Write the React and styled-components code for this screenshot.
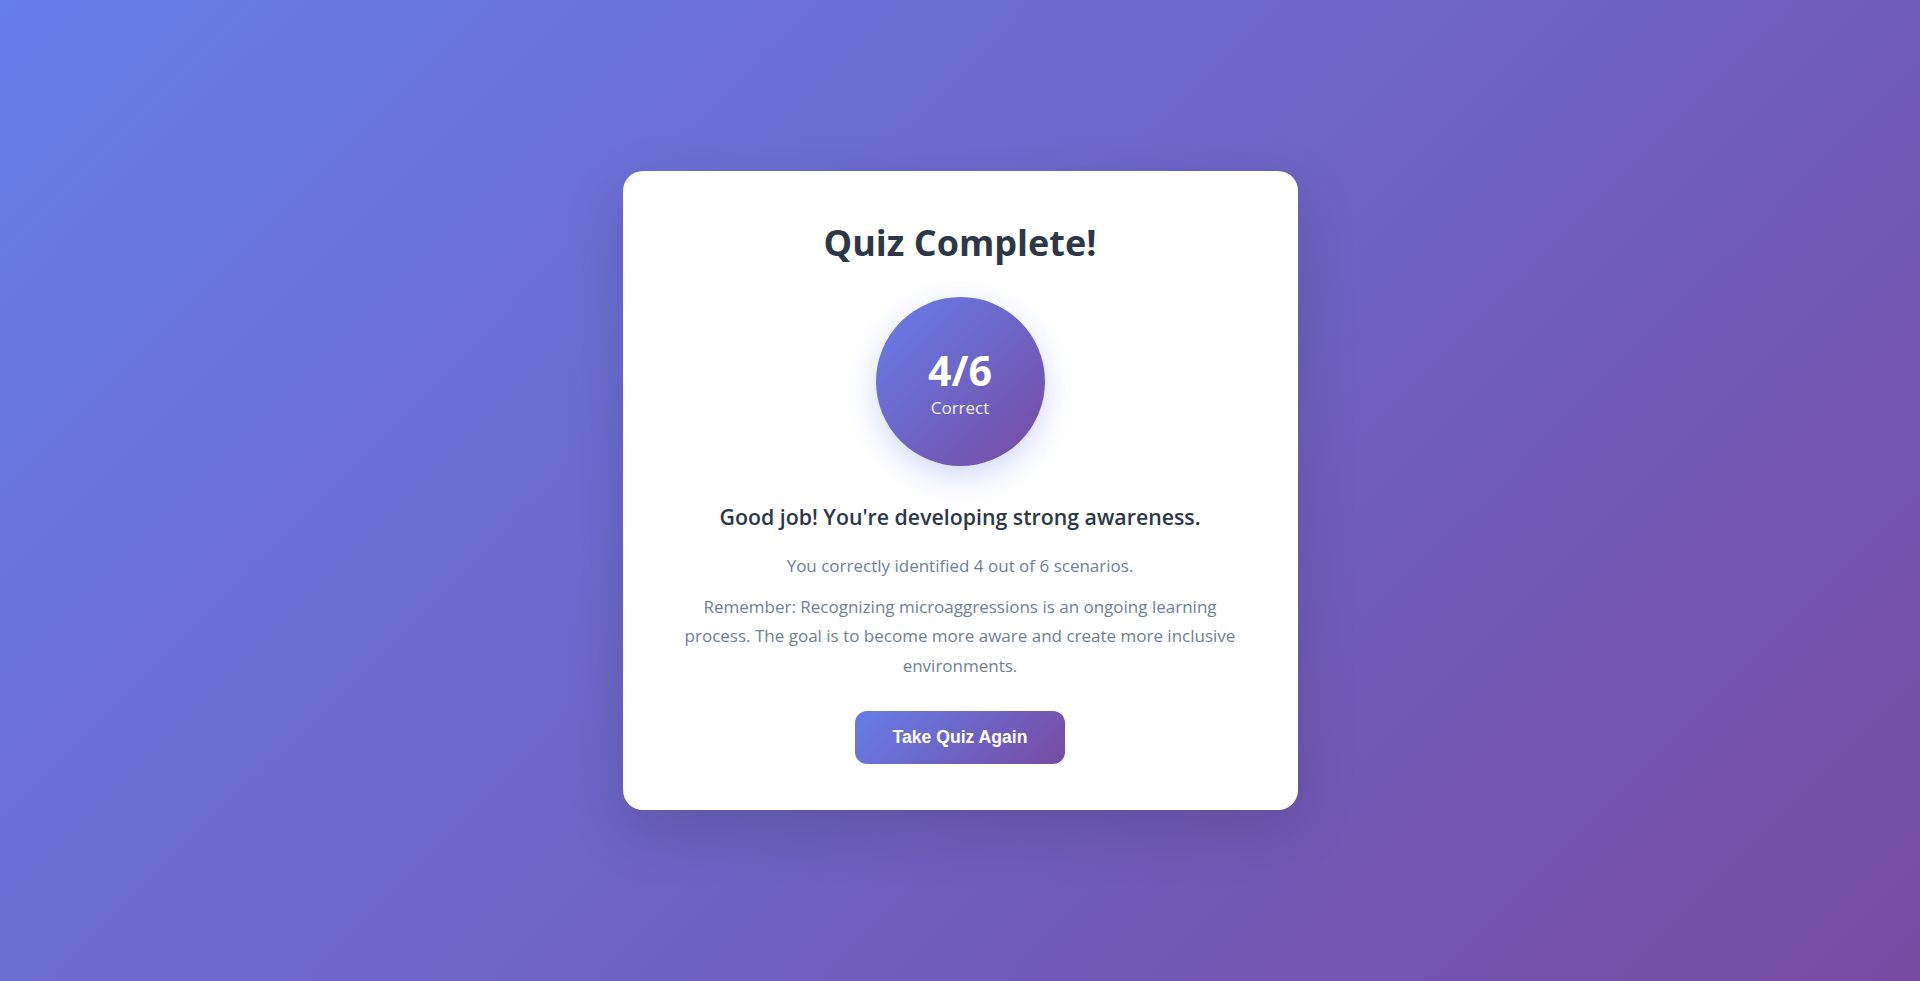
import React from 'react';
import styled, { createGlobalStyle } from 'styled-components';

const GlobalStyle = createGlobalStyle`
    * {
        box-sizing: border-box;
    }

    body {
        margin: 0;
        font-family: "Open Sans", "Noto Sans", sans-serif;
    }
`;

const Page = styled.div`
    min-height: 100vh;
    display: flex;
    align-items: center;
    justify-content: center;
    background: linear-gradient(135deg, #667eea 0%, #764ba2 100%);
`;

const Card = styled.div`
    width: 675px;
    background: #fff;
    border-radius: 20px;
    padding: 48px 48px 46px;
    text-align: center;
    box-shadow: 0 20px 60px rgba(0, 0, 0, 0.15);
`;

const Title = styled.h1`
    margin: 0 0 30px;
    font-size: 36px;
    line-height: 48px;
    font-weight: 700;
    color: #2d3748;
`;

const ScoreCircle = styled.div`
    width: 169px;
    height: 169px;
    margin: 0 auto 36px;
    padding-top: 4px;
    border-radius: 50%;
    display: flex;
    flex-direction: column;
    align-items: center;
    justify-content: center;
    color: #fff;
    background: linear-gradient(135deg, #667eea 0%, #764ba2 100%);
    box-shadow: 0 10px 30px rgba(102, 126, 234, 0.3);
`;

const ScoreValue = styled.div`
    font-size: 41px;
    font-weight: 700;
    line-height: 1.1;
`;

const ScoreLabel = styled.div`
    font-size: 17px;
    opacity: 0.9;
    margin-top: 3px;
`;

const Message = styled.h2`
    margin: 0 0 20px;
    font-size: 21.3px;
    font-weight: 600;
    line-height: 1.4;
    color: #2d3748;
`;

const Text = styled.p`
    margin: 0 0 ${props => props.$gap || 0}px;
    font-size: 17px;
    line-height: 29.5px;
    color: #718096;
`;

const RetryButton = styled.button`
    margin-top: 31px;
    padding: 16px 38px;
    border: none;
    border-radius: 12px;
    font-family: "Liberation Sans", Arial, sans-serif;
    font-size: 17.6px;
    font-weight: 700;
    color: #fff;
    cursor: pointer;
    background: linear-gradient(135deg, #667eea 0%, #764ba2 100%);
`;

const App = () => {
    const score = 4;
    const total = 6;

    return (
        <Page>
            <GlobalStyle />
            <Card>
                <Title>Quiz Complete!</Title>
                <ScoreCircle>
                    <ScoreValue>{score}/{total}</ScoreValue>
                    <ScoreLabel>Correct</ScoreLabel>
                </ScoreCircle>
                <Message>Good job! You're developing strong awareness.</Message>
                <Text $gap={11}>
                    You correctly identified {score} out of {total} scenarios.
                </Text>
                <Text>
                    Remember: Recognizing microaggressions is an ongoing learning process.
                    The goal is to become more aware and create more inclusive environments.
                </Text>
                <RetryButton>Take Quiz Again</RetryButton>
            </Card>
        </Page>
    );
};

export default App;
